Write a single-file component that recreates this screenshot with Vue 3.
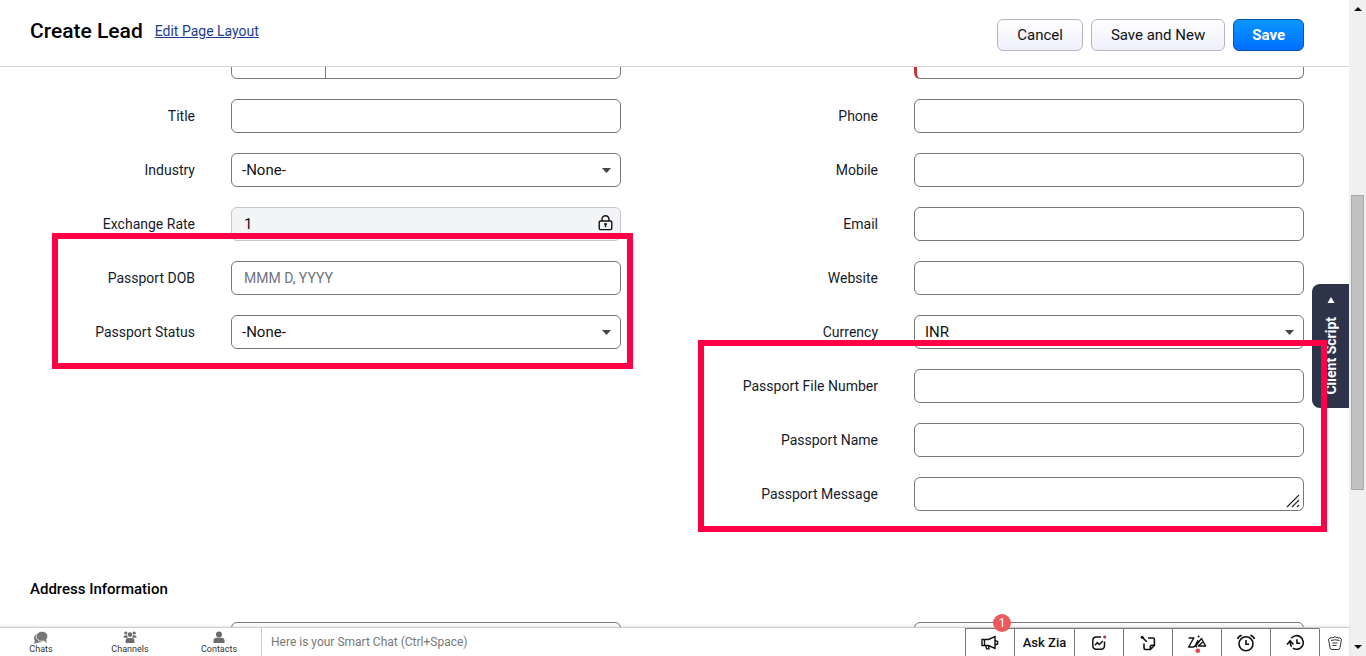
<script setup>
const leftBefore = [
  { id: 'title', label: 'Title', kind: 'text' },
  { id: 'industry', label: 'Industry', kind: 'select', options: ['-None-'] },
  { id: 'rate', label: 'Exchange Rate', kind: 'locked', value: '1' },
]
const leftMarked = [
  { id: 'dob', label: 'Passport DOB', kind: 'text', placeholder: 'MMM D, YYYY' },
  { id: 'status', label: 'Passport Status', kind: 'select', options: ['-None-'] },
]
const rightBefore = [
  { id: 'phone', label: 'Phone', kind: 'text' },
  { id: 'mobile', label: 'Mobile', kind: 'text' },
  { id: 'email', label: 'Email', kind: 'text' },
  { id: 'website', label: 'Website', kind: 'text' },
  { id: 'currency', label: 'Currency', kind: 'select', options: ['INR'] },
]
const rightMarked = [
  { id: 'file-number', label: 'Passport File Number', kind: 'text' },
  { id: 'passport-name', label: 'Passport Name', kind: 'text' },
  { id: 'message', label: 'Passport Message', kind: 'area' },
]
const columns = [
  { side: 'left', groups: [{ marked: false, fields: leftBefore }, { marked: true, fields: leftMarked }] },
  { side: 'right', groups: [{ marked: false, fields: rightBefore }, { marked: true, fields: rightMarked }] },
]
</script>

<template>
  <div class="window">
    <div class="page">
      <header class="head">
        <h1>Create Lead</h1>
        <a href="#layout">Edit Page Layout</a>
        <div class="actions">
          <button type="button" class="btn">Cancel</button>
          <button type="button" class="btn">Save and New</button>
          <button type="button" class="btn primary">Save</button>
        </div>
      </header>

      <main class="body">
        <form class="scroll">
          <div class="columns">
            <div v-for="col in columns" :key="col.side" class="column" :class="col.side">
              <div class="row">
                <span></span>
                <div v-if="col.side === 'left'" class="split">
                  <select aria-label="Salutation"></select>
                  <input type="text" aria-label="First Name" />
                </div>
                <input v-else type="text" class="control required" aria-label="Last Name" />
              </div>
              <div v-for="(group, g) in col.groups" :key="g" class="group" :class="{ marked: group.marked }">
                <div v-for="f in group.fields" :key="f.id" class="row">
                  <label :for="f.id">{{ f.label }}</label>
                  <div class="holder">
                    <template v-if="f.kind === 'select'">
                      <select :id="f.id" class="control">
                        <option v-for="o in f.options" :key="o">{{ o }}</option>
                      </select>
                      <svg class="caret" width="9" height="5" viewBox="0 0 9 5"><path d="M0 0h9L4.500 5z" fill="#444" /></svg>
                    </template>
                    <template v-else-if="f.kind === 'locked'">
                      <input :id="f.id" type="text" class="control locked" :value="f.value" readonly />
                      <svg class="lock" width="15" height="16" viewBox="0 0 15 16" fill="none" stroke="#111" stroke-width="1.4">
                        <rect x="1.2" y="6" width="12.6" height="8.6" rx="1.3" />
                        <path d="M4 6V4.2a3.5 3.5 0 0 1 7 0V6M6 9h3M7.5 9v3.2" />
                      </svg>
                    </template>
                    <template v-else-if="f.kind === 'area'">
                      <textarea :id="f.id" class="control" rows="1"></textarea>
                      <svg class="grip" width="14" height="14" viewBox="0 0 14 14" stroke="#222" stroke-width="1.1"><path d="M1 13L13 1M6 13l7-7M11 13l2-2" /></svg>
                    </template>
                    <input v-else :id="f.id" type="text" class="control" :placeholder="f.placeholder" />
                  </div>
                </div>
              </div>
            </div>
          </div>

          <h2>Address Information</h2>
          <div class="columns">
            <div class="row"><span></span><input type="text" class="control" aria-label="Street" /></div>
            <div class="row"><span></span><input type="text" class="control" aria-label="City" /></div>
          </div>
        </form>

        <button type="button" class="script-tab">
          <span>Client Script</span>
          <svg width="8" height="6" viewBox="0 0 8 6"><path d="M.5 6h7L4 0z" fill="#fff" /></svg>
        </button>
      </main>

      <footer class="foot">
        <nav class="tabs">
          <button type="button">
            <svg width="16" height="13" viewBox="0 0 16 13"><ellipse cx="6" cy="7" rx="5" ry="4.5" fill="#777" /><path d="M2 9l-1 4 5-2z" fill="#777" /><ellipse cx="9" cy="5.3" rx="5.8" ry="5" fill="#777" stroke="#fff" stroke-width=".8" /><path d="M10 9l4 3-1-4z" fill="#777" /></svg>
            Chats
          </button>
          <button type="button">
            <svg width="14" height="13" viewBox="0 0 14 13" fill="#6c6c6c"><circle cx="2.8" cy="2" r="1.6" /><circle cx="11.2" cy="2" r="1.6" /><circle cx="7" cy="3.6" r="2.3" /><path d="M.4 6.6c0-3 4-3 4.3-1.3l-.4 1.6zM13.6 6.6c0-3-4-3-4.3-1.3l.4 1.6zM2.6 12V9.6Q2.6 7 5 7h4q2.400 0 2.400 2.600V12z" /></svg>
            Channels
          </button>
          <button type="button">
            <svg width="12" height="13" viewBox="0 0 12 13" fill="#6c6c6c"><circle cx="6" cy="3.400" r="3" /><path d="M.5 12V9.800Q.5 6.800 4 6.800h4q3.500 0 3.500 3V12z" /></svg>
            Contacts
          </button>
        </nav>
        <input class="chat" type="text" aria-label="Smart Chat" placeholder="Here is your Smart Chat (Ctrl+Space)" />
        <div class="tools">
          <button type="button" aria-label="Announcements">
            <svg width="18" height="16" viewBox="0 0 18 16" fill="none" stroke="#111" stroke-width="1.4"><path d="M1 4.500h2.500v6H1zM3.500 4.500h4L14 1.500v12L7.500 10.500h-4M4.600 10.500l1 3.400h2.400l-.6-3.200M14 5.400l2.600 1v2.600l-2.600 1" /></svg>
            <span class="badge">1</span>
          </button>
          <button type="button" class="zia">Ask Zia</button>
          <button type="button" aria-label="Insights">
            <svg width="16" height="16" viewBox="0 0 16 16" fill="none" stroke="#111" stroke-width="1.500"><path d="M10 2H5.500Q1.800 2 1.800 5.700v4.800q0 3.700 3.700 3.700h4.300q3.700 0 3.700-3.700V6.500" /><path d="M4 10.200l2.300-2.700 2 2L11.800 6" /><circle cx="13.700" cy="1.900" r="1.500" fill="#b02a40" stroke="none" /></svg>
          </button>
          <button type="button" aria-label="Notes">
            <svg width="16" height="16" viewBox="0 0 16 16" fill="none" stroke="#111" stroke-width="1.600"><path d="M8 3h5q1.400 0 1.400 1.400v6.100l-4 4H5.400Q4 14.500 4 13.100V8.500M14.400 10.300h-2.700q-1.300 0-1.300 1.300v2.700" /><path d="M2 2l4.800 4.800" /><circle cx="2.200" cy="2.200" r="1.500" fill="#111" stroke="none" /></svg>
          </button>
          <button type="button" aria-label="Zia">
            <svg width="20" height="20" viewBox="0 0 20 20" fill="none" stroke="#111" stroke-width="1.400" stroke-linejoin="round"><path d="M1.600 5h5.200L1.600 14h4.600q1.300 0 2-1.300L11 7.200M10 14q-1.600 0-.8-1.700L14.500 5.500 18.600 13h-7.400l5-4.200" /><circle cx="11.600" cy="3.600" r="1" fill="#111" stroke="none" /><circle cx="10.800" cy="17.700" r="2.300" fill="#dc4650" stroke="none" /></svg>
          </button>
          <button type="button" aria-label="Reminders">
            <svg width="20" height="18" viewBox="0 0 20 18" fill="none" stroke="#111" stroke-width="1.600"><circle cx="10" cy="9.800" r="7" /><path d="M10 6v4.200h3.200M1.600 5Q2.600 2 5.600 1.400M18.400 5Q17.400 2 14.400 1.400" /></svg>
          </button>
          <button type="button" aria-label="History">
            <svg width="19" height="17" viewBox="0 0 19 17" fill="none" stroke="#111" stroke-width="1.600"><path d="M5.200 4.200A6.800 6.800 0 1 1 7 14.300M11 5.200v4h3.200" /><path d="M1 10.500l3.200-3.700 3.200 3.700M4.200 7.200q-.2 3.800 1.500 5.600" /></svg>
          </button>
          <button type="button" class="last" aria-label="Recycle bin">
            <svg width="16" height="16" viewBox="0 0 16 16" fill="none" stroke="#333"><path d="M1.500 4.300Q3 2.300 5 2.800 8 .8 11 2.800q2-.5 3.500 1.500L13 12.500q-.3 2-2 2H5q-1.700 0-2-2zM4 5.500q4-1.500 8.500 0M5.500 8h5M5.500 10.500h4" /></svg>
          </button>
        </div>
      </footer>
    </div>

    <div class="scrollbar" aria-hidden="true">
      <svg width="8" height="4" viewBox="0 0 8 4"><path d="M0 4h8L4 0z" fill="#111" /></svg>
      <div class="track"><div class="thumb"></div></div>
      <svg width="8" height="4" viewBox="0 0 8 4"><path d="M0 0h8L4 4z" fill="#111" /></svg>
    </div>
  </div>
</template>

<style>
body { margin: 0; background: #fff; }
</style>

<style scoped>
.window, .window * { box-sizing: border-box; }
.window {
  display: flex;
  height: 100vh;
  overflow: hidden;
  font-family: Roboto, "Liberation Sans", sans-serif;
  font-size: 14px;
  line-height: 20px;
  color: #161b2b;
}
button, input, select, textarea { font: inherit; color: #111; margin: 0; }
svg { display: block; flex: none; }
.page { flex: 1; min-width: 0; display: flex; flex-direction: column; }
.head {
  display: flex;
  align-items: center;
  gap: 12px;
  height: 67px;
  padding: 0 45px 4px 30px;
  border-bottom: 1px solid #d5d5d8;
}
h1 { margin: 0; font-size: 21px; line-height: 28px; font-weight: 500; color: #000; }
.head a { color: #1b3c92; }
.actions { display: flex; gap: 8px; margin-left: auto; padding-top: 8px; }
.btn {
  height: 32px;
  padding: 0 19px;
  border: 1px solid #b4b6c6;
  border-radius: 6px;
  background: linear-gradient(#fff, #eef0fa);
  font-size: 15px;
}
.btn.primary {
  padding: 0 18px;
  border-color: #0650b0;
  background: linear-gradient(#0a98ff, #006eff);
  color: #fff;
  font-weight: 700;
}
.body { flex: 1; min-height: 0; position: relative; overflow: hidden; }
.scroll { margin: -22px 45px 0 0; }
.columns { display: grid; grid-template-columns: 1fr 1fr; column-gap: 62px; }
.column { display: flex; flex-direction: column; gap: 20px; }
.group { position: relative; display: flex; flex-direction: column; gap: 20px; }
.row { display: grid; grid-template-columns: 195px 1fr; column-gap: 36px; align-items: center; }
.row label { text-align: right; }
.holder { position: relative; display: flex; }
.control, .split {
  display: block;
  width: 100%;
  height: 34px;
  padding: 0 12px;
  border: 1px solid #77777c;
  border-radius: 6px;
  background: #fff;
  outline: none;
}
select.control { padding: 0 10px; appearance: none; font-size: 15px; }
textarea.control { padding: 6px 12px; resize: none; overflow: hidden; }
.control::placeholder { color: #6f7280; opacity: 1; }
.control.required { border-left: 3px solid #c8323c; }
.control.locked { background: #f3f4f6; border-color: #c3c5ca; font-size: 15px; }
.split { display: flex; padding: 0; }
.split select { width: 94px; border: 0; border-right: 1px solid #77777c; background: none; appearance: none; }
.split input { flex: 1; min-width: 0; border: 0; background: none; }
.caret { position: absolute; right: 10px; top: 15px; pointer-events: none; }
.lock { position: absolute; right: 8px; top: 8px; }
.grip { position: absolute; right: 4px; bottom: 3px; pointer-events: none; }
.marked::after {
  content: "";
  position: absolute;
  z-index: 2;
  border: 6px solid #ff0046;
  pointer-events: none;
}
.left .marked::after { inset: -28px -12px -20px 52px; }
.right .marked::after { inset: -29px -23px -21px 15px; }
h2 { margin: 68px 0 23px 30px; font-size: 15px; line-height: 20px; font-weight: 500; color: #000; }
.script-tab {
  position: absolute;
  z-index: 1;
  right: 0;
  top: 217px;
  width: 37px;
  height: 124px;
  display: flex;
  flex-direction: column-reverse;
  align-items: center;
  justify-content: space-between;
  padding: 13px 0;
  border: 0;
  border-radius: 8px 0 0 8px;
  background: #2d3449;
  color: #fff;
  font-size: 14px;
  font-weight: 700;
}
.script-tab span { writing-mode: vertical-rl; transform: rotate(180deg); line-height: 20px; }
.foot { display: flex; height: 29px; border-top: 1px solid #cfcfcf; background: #fff; box-shadow: 0 -1px 3px #0000001a; position: relative; }
.foot button { border: 0; padding: 0; background: none; }
.foot .tabs { display: flex; gap: 7px; padding-right: 1px; border-right: 1px solid #ccc; }
.foot .tabs button {
  width: 82px;
  padding-top: 3px;
  display: flex;
  flex-direction: column;
  align-items: center;
  font-size: 9px;
  line-height: 10px;
  color: #333;
}
.foot .chat { flex: 1; min-width: 0; border: 0; padding: 0 9px; outline: none; background: none; font-size: 12px; }
.chat::placeholder { color: #777; opacity: 1; }
.tools { display: flex; }
.foot .tools button {
  position: relative;
  width: 49px;
  display: flex;
  align-items: center;
  justify-content: center;
  border-top: 1px solid #77777c;
  border-left: 1px solid #77777c;
}
.foot .tools .zia { width: 60px; font-size: 13px; font-weight: 500; }
.foot .tools .last { width: 30px; border-top-color: transparent; }
.badge {
  position: absolute;
  left: 27px;
  top: -15px;
  width: 18px;
  height: 18px;
  border-radius: 9px;
  background: #ec5a60;
  color: #fff;
  font-size: 12px;
  line-height: 18px;
  text-align: center;
}
.scrollbar {
  width: 17px;
  padding: 7px 0;
  display: flex;
  flex-direction: column;
  align-items: center;
  background: #f0f0f0;
}
.track { flex: 1; width: 13px; padding: 184px 0 155px; }
.thumb { height: 100%; background: #c1c1c1; border: 1px solid #aaa; }
</style>
